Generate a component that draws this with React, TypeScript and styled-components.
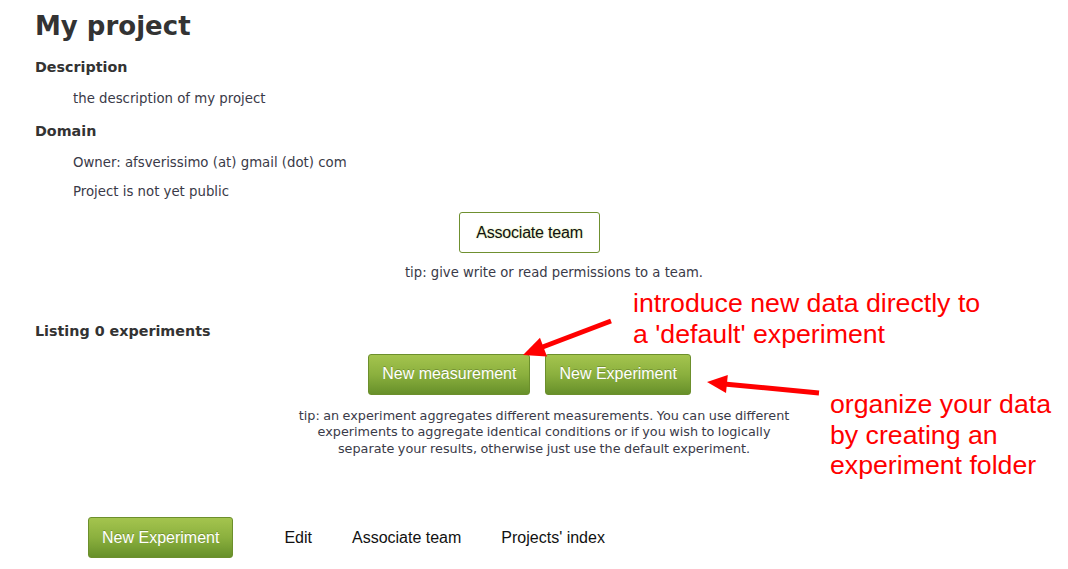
import styled, { createGlobalStyle, css } from "styled-components";

const GlobalStyle = createGlobalStyle`
  body {
    margin: 0;
    background: #fff;
    font-family: "DejaVu Sans", Verdana, sans-serif;
    color: #333;
  }
`;

const Page = styled.div`
  position: relative;
  width: 1068px;
  height: 569px;
  overflow: hidden;
  box-sizing: border-box;
  padding: 8px 15px 0 35px;
`;

const Title = styled.h1`
  margin: 0;
  font-size: 26px;
  line-height: 36px;
  font-weight: bold;
  color: #333;
`;

const Heading = styled.h3<{ $top: number }>`
  margin: ${(p) => p.$top}px 0 0;
  font-size: 14.3px;
  line-height: 20px;
  font-weight: bold;
  color: #333;
`;

const Detail = styled.p<{ $top: number }>`
  margin: ${(p) => p.$top}px 0 0 38px;
  font-size: 13.3px;
  line-height: 18px;
  color: #3a3a48;
`;

const ButtonRow = styled.div<{ $top: number }>`
  display: flex;
  justify-content: center;
  gap: 15px;
  margin-top: ${(p) => p.$top}px;
  padding-right: 29px;
`;

const buttonBase = css`
  box-sizing: border-box;
  height: 41px;
  padding: 0 13px;
  border-radius: 3px;
  font-family: "Liberation Sans", Arial, sans-serif;
  font-size: 16px;
  display: inline-flex;
  align-items: center;
  justify-content: center;
  cursor: pointer;
`;

const PlainButton = styled.button`
  ${buttonBase};
  width: 141px;
  background: #fff;
  border: 1px solid #6f9030;
  color: #111;
  letter-spacing: -0.2px;
  text-shadow: 0 0 2px #d4e88a;
`;

const GreenButton = styled.button`
  ${buttonBase};
  background: linear-gradient(#a4c44e, #8bb03e 50%, #67902a);
  border: 1px solid #6c8f2c;
  color: #fff;
  text-shadow: 0 -1px 0 rgba(60, 80, 20, 0.35);
`;

const Tip = styled.p<{ $top: number; $shift?: number; $size?: number }>`
  margin: ${(p) => p.$top}px auto 0;
  padding-left: ${(p) => p.$shift ?? 0}px;
  max-width: 505px;
  text-align: center;
  font-size: ${(p) => p.$size ?? 12.8}px;
  word-spacing: ${(p) => (p.$size ? 0 : -0.6)}px;
  line-height: 16.5px;
  color: #3a3a48;
`;

const Tips = styled.div`
  width: 1018px;
`;

const Footer = styled.div`
  display: flex;
  align-items: center;
  margin-top: 60px;
  padding-left: 53px;
  font-family: "Liberation Sans", Arial, sans-serif;
  font-size: 16px;
`;

const FooterLink = styled.a<{ $left: number }>`
  margin-left: ${(p) => p.$left}px;
  color: #111;
  text-decoration: none;
`;

const Note = styled.div<{ $x: number; $y: number }>`
  position: absolute;
  left: ${(p) => p.$x}px;
  top: ${(p) => p.$y}px;
  font-family: "Liberation Sans", Arial, sans-serif;
  font-size: 26.7px;
  line-height: 30.5px;
  color: #ff0000;
  white-space: nowrap;
`;

const Overlay = styled.svg`
  position: absolute;
  left: 0;
  top: 0;
  pointer-events: none;
`;

export default function App() {
  return (
    <>
      <GlobalStyle />
      <Page>
        <Title>My project</Title>
        <Heading $top={13}>Description</Heading>
        <Detail $top={13}>the description of my project</Detail>
        <Heading $top={13}>Domain</Heading>
        <Detail $top={13}>Owner: afsverissimo (at) gmail (dot) com</Detail>
        <Detail $top={11}>Project is not yet public</Detail>

        <Tips>
          <ButtonRow $top={11}>
            <PlainButton>Associate team</PlainButton>
          </ButtonRow>
          <Tip $top={12} $shift={20} $size={13.2}>
            tip: give write or read permissions to a team.
          </Tip>
        </Tips>

        <Heading $top={39}>Listing 0 experiments</Heading>

        <Tips>
          <ButtonRow $top={13}>
            <GreenButton>New measurement</GreenButton>
            <GreenButton>New Experiment</GreenButton>
          </ButtonRow>
          <Tip $top={13}>
            tip: an experiment aggregates different measurements. You can use
            different experiments to aggregate identical conditions or if you
            wish to logically separate your results, otherwise just use the
            default experiment.
          </Tip>
        </Tips>

        <Footer>
          <GreenButton>New Experiment</GreenButton>
          <FooterLink $left={51}>Edit</FooterLink>
          <FooterLink $left={40}>Associate team</FooterLink>
          <FooterLink $left={40}>Projects' index</FooterLink>
        </Footer>

        <Note $x={633} $y={288}>
          introduce new data directly to
          <br />a 'default' experiment
        </Note>
        <Note $x={830} $y={389}>
          organize your data
          <br />
          by creating an
          <br />
          experiment folder
        </Note>

        <Overlay width="1068" height="569" viewBox="0 0 1068 569">
          <g fill="#ff0000" stroke="none">
            <line x1="611" y1="321" x2="540" y2="348" stroke="#ff0000" strokeWidth="5" />
            <polygon points="523,355 547,356.4 540,337.8" />
            <line x1="819" y1="393" x2="724" y2="384" stroke="#ff0000" strokeWidth="5" />
            <polygon points="707,382 727.8,375 726,393" />
          </g>
        </Overlay>
      </Page>
    </>
  );
}
